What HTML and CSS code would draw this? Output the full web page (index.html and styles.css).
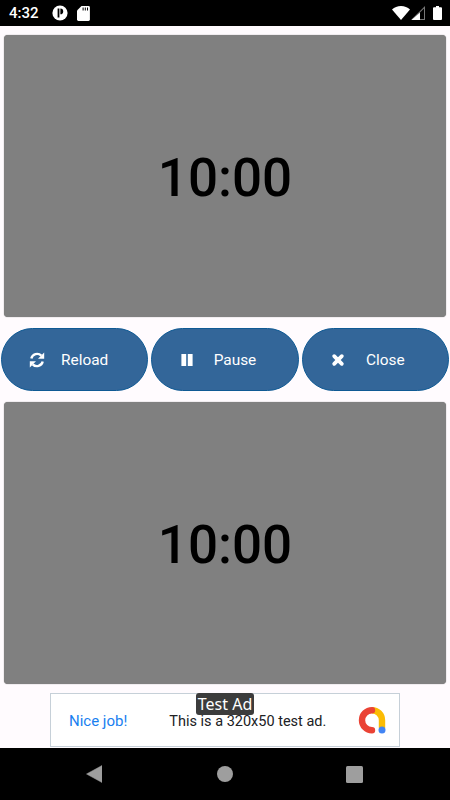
FILE: index.html
```html
<!DOCTYPE html>
<html>
  <head>
    <title>Timer</title>
    <link rel="stylesheet" href="styles.css">
  </head>
  <body>
    <div class="statusbar">
      <span class="clock">4:32</span>
      <svg class="status-icon" width="16" height="16" viewBox="0 0 16 16">
        <circle cx="8" cy="8" r="7.6" fill="#fff"/>
        <path d="M5.600 3.500h1.800v9H5.600z" fill="#000"/>
        <path d="M8.400 3.600a2.800 2.800 0 0 1 0 5.600z" fill="#000"/>
      </svg>
      <svg class="status-icon sd" width="13" height="15" viewBox="0 0 13 15">
        <path d="M4.500 0H11.500a1.400 1.400 0 0 1 1.400 1.400V13.600a1.400 1.400 0 0 1-1.400 1.400H1.400A1.400 1.400 0 0 1 0 13.600V4.500z" fill="#fff"/>
        <path d="M5.600 1.400h1v3h-1zM7.800 1.400h1v3h-1zM10 1.400h1v3h-1z" fill="#000"/>
      </svg>
      <span class="spacer"></span>
      <svg width="18" height="14" viewBox="0 0 18 14">
        <path d="M0 3.600C2.400 1.400 5.500 0 9 0s6.600 1.400 9 3.600L9 14z" fill="#fff"/>
      </svg>
      <svg class="signal" width="14" height="14" viewBox="0 0 14 14">
        <path d="M14 0V14H0z" fill="#777"/>
        <path d="M13 2.400V13H2.400z" fill="#000"/>
        <path d="M9 6.400V14H0.800L1 13.500z" fill="#fff"/>
      </svg>
      <svg class="battery" width="9" height="14" viewBox="0 0 9 14">
        <path d="M3 0h3v1.200h2a1 1 0 0 1 1 1V13a1 1 0 0 1-1 1H1a1 1 0 0 1-1-1V2.200a1 1 0 0 1 1-1h2z" fill="#fff"/>
      </svg>
    </div>

    <div class="main">
      <div class="timer"><span>10:00</span></div>

      <div class="buttons">
        <button class="btn">
          <svg width="16" height="16" viewBox="0 0 16 16">
            <path d="M2.300 6.500A5.900 5.900 0 0 1 12.300 3.700" fill="none" stroke="#fff" stroke-width="2.400"/>
            <path d="M15.200 .6V6.800H9z" fill="#fff"/>
            <path d="M13.700 9.500A5.900 5.900 0 0 1 3.700 12.300" fill="none" stroke="#fff" stroke-width="2.400"/>
            <path d="M.8 15.400V9.200H7z" fill="#fff"/>
          </svg>
          <span class="btn-label">Reload</span>
        </button>
        <button class="btn">
          <svg width="16" height="16" viewBox="0 0 16 16">
            <path d="M2.400 2H7.200V14H2.400zM8.800 2H13.600V14H8.800z" fill="#fff"/>
          </svg>
          <span class="btn-label">Pause</span>
        </button>
        <button class="btn">
          <svg width="16" height="16" viewBox="0 0 16 16">
            <path d="M4.200 4.200L11.800 11.800M11.800 4.200L4.200 11.800" fill="none" stroke="#fff" stroke-width="3.800" stroke-linecap="round"/>
          </svg>
          <span class="btn-label">Close</span>
        </button>
      </div>

      <div class="timer"><span>10:00</span></div>

      <div class="ad">
        <span class="ad-tag">Test Ad</span>
        <span class="ad-nice">Nice job!</span>
        <span class="ad-text">This is a 320x50 test ad.</span>
        <svg class="ad-logo" width="28" height="28" viewBox="0 0 28 28">
          <path d="M14 3.200A10 10 0 0 1 24 13.200V21" fill="none" stroke="#fbbc04" stroke-width="6.400"/>
          <path d="M14 3.200A10 10 0 0 0 14 23.200" fill="none" stroke="#ea4335" stroke-width="6.400" stroke-linecap="round"/>
          <circle cx="24" cy="23" r="3.500" fill="#4285f4"/>
        </svg>
      </div>
    </div>

    <div class="navbar">
      <svg width="16" height="18" viewBox="0 0 16 18"><path d="M16 .5V17.500L.5 9z" fill="#9e9e9e" stroke="#9e9e9e" stroke-width=".5" stroke-linejoin="round"/></svg>
      <svg class="nav-home" width="16" height="16" viewBox="0 0 16 16"><circle cx="8" cy="8" r="8" fill="#9e9e9e"/></svg>
      <svg width="17" height="17" viewBox="0 0 17 17"><rect width="17" height="17" rx="1.500" fill="#9e9e9e"/></svg>
    </div>
  </body>
</html>
```

FILE: styles.css
```css
/* page */
html, body {
    height: 100%;
}

body {
    margin: 0;
    width: 450px;
    height: 800px;
    display: flex;
    flex-direction: column;
    overflow: hidden;
    background-color: #fffbfe;
    font-family: Roboto, sans-serif;
}

/* status bar */
.statusbar {
    height: 26px;
    flex: none;
    display: flex;
    align-items: center;
    padding: 0 5px 0 9px;
    background-color: #000;
    color: #fff;
}

.clock {
    width: 29px;
    font-size: 15px;
    font-weight: 500;
    margin-right: 14px;
}

.status-icon {
    margin-right: 9px;
}

.status-icon.sd {
    margin-right: 0;
}

.spacer {
    flex: 1;
}

.signal {
    margin-left: 1px;
}

.battery {
    margin: 0 3px 0 8px;
}

/* main area */
.main {
    flex: 1;
    display: flex;
    flex-direction: column;
    align-items: center;
}

.timer {
    width: 442px;
    height: 282px;
    box-sizing: border-box;
    padding-top: 5px;
    margin-top: 9px;
    display: flex;
    align-items: center;
    justify-content: center;
    background-color: #808080;
    border-radius: 4px;
    box-shadow: 0 0 1px rgba(0, 0, 0, 0.6);
    color: #000;
    font-size: 53px;
    font-weight: 500;
    line-height: 1;
}

.timer + .buttons + .timer {
    margin-top: 11px;
}

/* buttons */
.buttons {
    width: 450px;
    box-sizing: border-box;
    padding: 0 1px;
    margin-top: 11px;
    display: flex;
    gap: 3px;
}

.btn {
    flex: 1;
    height: 63px;
    padding: 0 23px 0 27px;
    display: flex;
    align-items: center;
    background-color: #336699;
    border: 1px solid #0f5a94;
    border-radius: 32px;
    color: #fff;
    font-family: Roboto, sans-serif;
    font-size: 15.400px;
}

.btn-label {
    flex: 1;
    text-align: center;
}

/* ad banner */
.ad {
    position: relative;
    width: 348px;
    height: 52px;
    box-sizing: content-box;
    margin-top: 9px;
    display: flex;
    align-items: center;
    background-color: #fff;
    border: 1px solid #c6d0d8;
}

.ad-tag {
    position: absolute;
    top: -1px;
    left: 145px;
    width: 58px;
    height: 22px;
    text-align: center;
    background-color: #3c3c3c;
    border-radius: 3px;
    color: #fff;
    font-size: 16px;
    line-height: 22px;
    font-family: "Noto Sans", sans-serif;
}

.ad-nice {
    margin: 2px 0 0 18px;
    color: #1a80f0;
    font-size: 15px;
}

.ad-text {
    margin: 2px 0 0 42px;
    color: #202124;
    font-size: 14.500px;
}

.ad-logo {
    position: absolute;
    right: 13px;
    top: 13px;
}

/* navigation bar */
.navbar {
    height: 52px;
    flex: none;
    display: flex;
    align-items: center;
    justify-content: space-between;
    padding: 0 87px 0 86px;
    background-color: #000;
}

.nav-home {
    margin: 0 -1px 0 1px;
}
```
